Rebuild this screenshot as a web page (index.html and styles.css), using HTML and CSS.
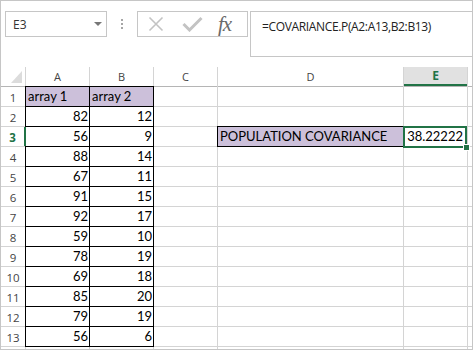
FILE: index.html
```html
<!DOCTYPE html>
<html lang="en">

<head>
    <meta charset="UTF-8">
    <title>COVARIANCE.P</title>
    <link rel="stylesheet" href="styles.css">
</head>

<body>
    <div class="sheet">
        <div class="toolbar">
            <div class="namebox"><span>E3</span><span class="caret"></span></div>
            <div class="grip"><i></i><i></i><i></i></div>
            <div class="fbuttons">
                <svg class="icon-x" width="16" height="16" viewBox="0 0 16 16">
                    <path d="M1.5 1.5 L14.5 14.5 M14.5 1.5 L1.5 14.5" stroke="#c3c3c3" stroke-width="1.6" fill="none" />
                </svg>
                <svg class="icon-ok" width="21" height="16" viewBox="0 0 21 16">
                    <polyline points="1.5,8 7.5,14 19.5,2" stroke="#c3c3c3" stroke-width="3" fill="none" />
                </svg>
                <span class="fx">fx</span>
            </div>
            <div class="formula">=COVARIANCE.P(A2:A13,B2:B13)</div>
        </div>

        <div class="grid">
            <!-- kolonne overskrifter -->
            <div class="ch corner">
                <svg width="24" height="19" viewBox="0 0 24 19">
                    <polygon points="10,16 21,16 21,4" fill="#dcdcdc" />
                </svg>
            </div>
            <div class="ch">A</div>
            <div class="ch">B</div>
            <div class="ch">C</div>
            <div class="ch">D</div>
            <div class="ch active">E</div>
            <div class="ch"></div>

            <div class="rh">1</div>
            <div class="c b lav">array 1</div>
            <div class="c b lav">array 2</div>
            <div class="c"></div><div class="c"></div><div class="c"></div><div class="c"></div>

            <div class="rh">2</div>
            <div class="c b n">82</div>
            <div class="c b n">12</div>
            <div class="c"></div><div class="c"></div><div class="c"></div><div class="c"></div>

            <div class="rh active">3</div>
            <div class="c b n">56</div>
            <div class="c b n">9</div>
            <div class="c"></div>
            <div class="c b lav">POPULATION COVARIANCE</div>
            <div class="c n sel">38.22222</div>
            <div class="c"></div>

            <div class="rh">4</div>
            <div class="c b n">88</div>
            <div class="c b n">14</div>
            <div class="c"></div><div class="c"></div><div class="c"></div><div class="c"></div>

            <div class="rh">5</div>
            <div class="c b n">67</div>
            <div class="c b n">11</div>
            <div class="c"></div><div class="c"></div><div class="c"></div><div class="c"></div>

            <div class="rh">6</div>
            <div class="c b n">91</div>
            <div class="c b n">15</div>
            <div class="c"></div><div class="c"></div><div class="c"></div><div class="c"></div>

            <div class="rh">7</div>
            <div class="c b n">92</div>
            <div class="c b n">17</div>
            <div class="c"></div><div class="c"></div><div class="c"></div><div class="c"></div>

            <div class="rh">8</div>
            <div class="c b n">59</div>
            <div class="c b n">10</div>
            <div class="c"></div><div class="c"></div><div class="c"></div><div class="c"></div>

            <div class="rh">9</div>
            <div class="c b n">78</div>
            <div class="c b n">19</div>
            <div class="c"></div><div class="c"></div><div class="c"></div><div class="c"></div>

            <div class="rh">10</div>
            <div class="c b n">69</div>
            <div class="c b n">18</div>
            <div class="c"></div><div class="c"></div><div class="c"></div><div class="c"></div>

            <div class="rh">11</div>
            <div class="c b n">85</div>
            <div class="c b n">20</div>
            <div class="c"></div><div class="c"></div><div class="c"></div><div class="c"></div>

            <div class="rh">12</div>
            <div class="c b n">79</div>
            <div class="c b n">19</div>
            <div class="c"></div><div class="c"></div><div class="c"></div><div class="c"></div>

            <div class="rh">13</div>
            <div class="c b n">56</div>
            <div class="c b n">6</div>
            <div class="c"></div><div class="c"></div><div class="c"></div><div class="c"></div>

            <!-- rad 14, bare toppen synes -->
            <div class="rh"></div>
            <div class="c"></div><div class="c"></div><div class="c"></div><div class="c"></div><div class="c"></div><div class="c"></div>
        </div>
    </div>
</body>

</html>
```

FILE: styles.css
```css
body {
    margin: 0;
    font-family: "Open Sans", sans-serif;
}

.sheet {
    width: 471px;
    height: 348px;
    border: 1px solid #c6c6c6;
    background-color: white;
    display: flex;
    flex-direction: column;
    overflow: hidden;
}

/* formel linje */
.toolbar {
    height: 66px;
    flex: none;
    display: flex;
    align-items: flex-start;
    padding: 10px 0 0 4px;
    box-sizing: border-box;
}

.namebox {
    width: 102px;
    height: 26px;
    box-sizing: border-box;
    border: 1px solid #c6c6c6;
    display: flex;
    align-items: center;
    justify-content: space-between;
    padding: 0 4px 0 7px;
    font-size: 12px;
    color: #333333;
}

.caret {
    width: 0;
    height: 0;
    border-left: 4px solid transparent;
    border-right: 4px solid transparent;
    border-top: 4px solid #777777;
}

.grip {
    width: 30px;
    display: flex;
    flex-direction: column;
    align-items: center;
    gap: 2px;
    padding-top: 8px;
}

.grip i {
    display: block;
    width: 2px;
    height: 2px;
    background-color: #a6a6a6;
}

.fbuttons {
    width: 111px;
    height: 26px;
    box-sizing: border-box;
    border: 1px solid #c6c6c6;
    display: flex;
    align-items: center;
}

.icon-x {
    margin-left: 10px;
}

.icon-ok {
    margin-left: 18px;
}

.fx {
    margin-left: 15px;
    font-family: "Liberation Serif", serif;
    font-style: italic;
    font-size: 21px;
    line-height: 24px;
    color: #6a6a6a;
    letter-spacing: -1px;
}

.formula {
    margin-left: 2px;
    width: 222px;
    height: 46px;
    box-sizing: border-box;
    border: 1px solid #c6c6c6;
    border-right: none;
    padding: 6px 0 0 11px;
    font-size: 12px;
    letter-spacing: -0.35px;
    color: #222222;
    white-space: nowrap;
}

/* regneark */
.grid {
    display: grid;
    grid-template-columns: 24px 63px 63px 63px 185px 63px 4px;
    grid-template-rows: repeat(14, 19px) 2px;
    gap: 1px;
    background-color: #d4d4d4;
}

.ch,
.rh {
    background-color: white;
    color: #444444;
    font-size: 11px;
    line-height: 19px;
    text-align: center;
}

.ch {
    box-shadow: 0 1px 0 #b5b5b5;
}

.corner svg {
    display: block;
}

.ch.active {
    background-color: #e1e1e1;
    color: #217346;
    font-weight: bold;
    font-size: 12px;
    border-bottom: 2px solid #217346;
    line-height: 17px;
}

.rh {
    padding-top: 1px;
    box-sizing: border-box;
    font-size: 11.5px;
}

.rh.active {
    position: relative;
    z-index: 1;
    color: #217346;
    font-weight: bold;
    border-right: 1px solid #217346;
    box-shadow: 1px 0 0 #217346;
}

.c {
    background-color: white;
    font-family: Lato, "Liberation Sans", sans-serif;
    font-size: 13px;
    line-height: 19px;
    color: black;
    padding: 0 2px;
    white-space: nowrap;
    overflow: hidden;
}

.b {
    outline: 1px solid black;
}

.lav {
    background-color: #ccc0da;
}

.n {
    text-align: right;
    padding-right: 1px;
}

.sel {
    position: relative;
    overflow: visible;
    padding-right: 4px;
}

.sel::before {
    content: "";
    position: absolute;
    top: -1px;
    left: -1px;
    right: 0;
    bottom: -2px;
    border: 2px solid #217346;
}

.sel::after {
    content: "";
    position: absolute;
    right: -3px;
    bottom: -5px;
    width: 5px;
    height: 5px;
    background-color: #217346;
    border: 1px solid white;
}
```
